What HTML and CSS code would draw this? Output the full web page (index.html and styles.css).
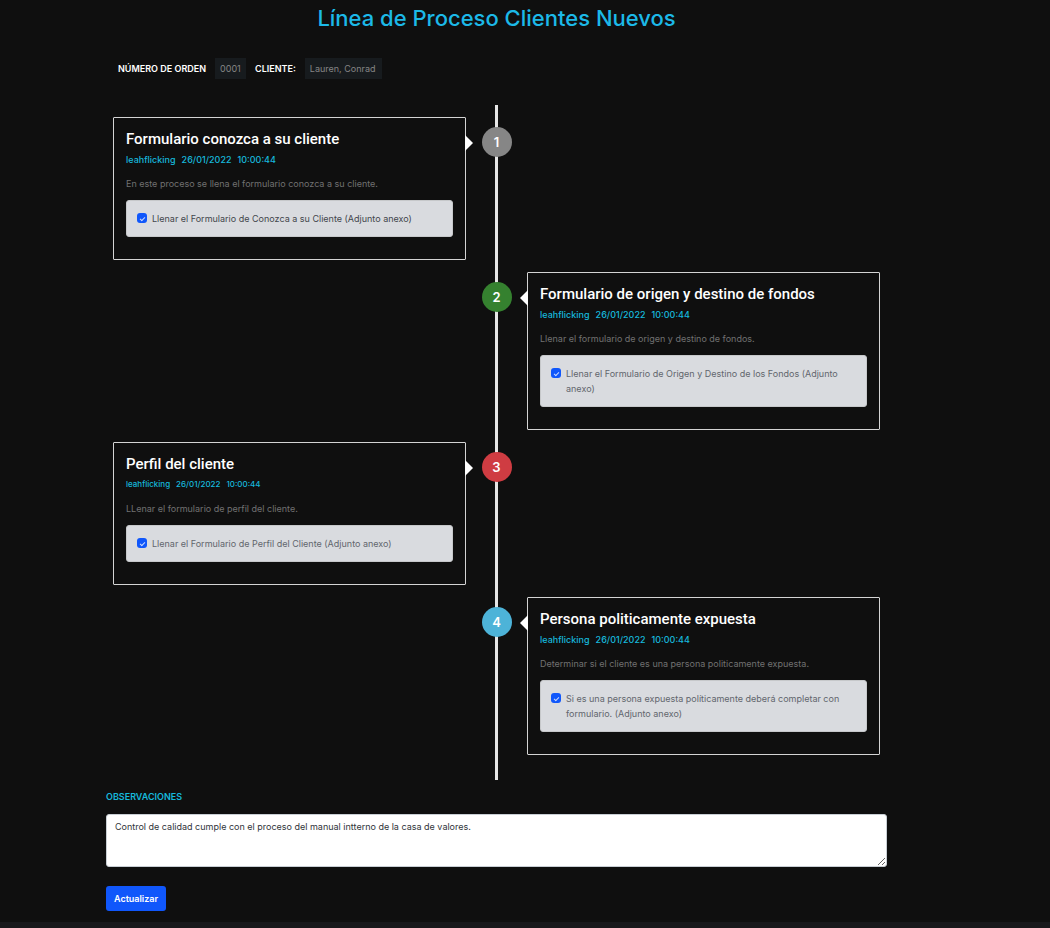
FILE: index.html
```
<!DOCTYPE html>
<html lang="es">
<head>
<meta charset="utf-8">
<meta name="viewport" content="width=device-width, initial-scale=1">
<title>Línea de Proceso Clientes Nuevos</title>
<link rel="stylesheet" href="styles.css">
</head>
<body>
<main class="page">
  <h1 class="page-title">Línea de Proceso Clientes Nuevos</h1>

  <form class="order">
    <label class="order-label" for="orden">NÚMERO DE ORDEN</label>
    <input class="order-value order-number" id="orden" value="0001" readonly>
    <label class="order-label" for="cliente">CLIENTE:</label>
    <input class="order-value order-client" id="cliente" value="Lauren, Conrad" readonly>
  </form>

  <ol class="timeline">
    <li class="step">
      <span class="badge badge-gray">1</span>
      <article class="panel">
        <h2 class="panel-title">Formulario conozca a su cliente</h2>
        <p class="meta"><span>leahflicking</span><span>26/01/2022</span><span>10:00:44</span></p>
        <p class="description">En este proceso se llena el formulario conozca a su cliente.</p>
        <label class="task task-dark"><input class="check" type="checkbox" checked><span>Llenar el Formulario de Conozca a su Cliente (Adjunto anexo)</span></label>
      </article>
    </li>
    <li class="step step-right">
      <span class="badge badge-green">2</span>
      <article class="panel">
        <h2 class="panel-title">Formulario de origen y destino de fondos</h2>
        <p class="meta"><span>leahflicking</span><span>26/01/2022</span><span>10:00:44</span></p>
        <p class="description">Llenar el formulario de origen y destino de fondos.</p>
        <label class="task"><input class="check" type="checkbox" checked><span>Llenar el Formulario de Origen y Destino de los Fondos (Adjunto anexo)</span></label>
      </article>
    </li>
    <li class="step">
      <span class="badge badge-red">3</span>
      <article class="panel">
        <h2 class="panel-title">Perfil del cliente</h2>
        <p class="meta meta-small"><span>leahflicking</span><span>26/01/2022</span><span>10:00:44</span></p>
        <p class="description">LLenar el formulario de perfil del cliente.</p>
        <label class="task"><input class="check" type="checkbox" checked><span>Llenar el Formulario de Perfil del Cliente (Adjunto anexo)</span></label>
      </article>
    </li>
    <li class="step step-right">
      <span class="badge badge-blue">4</span>
      <article class="panel">
        <h2 class="panel-title">Persona politicamente expuesta</h2>
        <p class="meta"><span>leahflicking</span><span>26/01/2022</span><span>10:00:44</span></p>
        <p class="description">Determinar si el cliente es una persona politicamente expuesta.</p>
        <label class="task"><input class="check" type="checkbox" checked><span>Si es una persona expuesta políticamente deberá completar con formulario. (Adjunto anexo)</span></label>
      </article>
    </li>
  </ol>

  <form class="notes">
    <label class="notes-label" for="observaciones">OBSERVACIONES</label>
    <textarea class="notes-text" id="observaciones">Control de calidad cumple con el proceso del manual intterno de la casa de valores.</textarea>
    <button class="submit" type="button">Actualizar</button>
  </form>
</main>
<footer class="footer"></footer>
</body>
</html>
```

FILE: styles.css
```
* {
  box-sizing: border-box;
}

body {
  margin: 0;
  min-height: 100vh;
  display: flex;
  flex-direction: column;
  background: #0f0f0f;
  color: #fff;
  font-family: Inter, "Liberation Sans", sans-serif;
  font-size: 9px;
  line-height: 15px;
}

h1, h2, p, ol {
  margin: 0;
  padding: 0;
}

input, textarea, button {
  font: inherit;
}

.page {
  flex: 1;
  padding: 4px 163px 0 106px;
}

.page-title {
  color: #1cb9e8;
  font-size: 22px;
  font-weight: 500;
  line-height: 28px;
  text-align: center;
}

.order {
  display: flex;
  align-items: center;
  gap: 9px;
  padding: 26px 12px;
}

.order-label {
  font-weight: 600;
}

.order-value {
  height: 21px;
  padding: 0 5px;
  border: 0;
  background: #171b1e;
  color: #858585;
}

.order-number {
  width: 31px;
}

.order-client {
  width: 77px;
}

.timeline {
  position: relative;
  display: flex;
  flex-direction: column;
  gap: 12px;
  padding: 12px 7px 25px;
  list-style: none;
}

.timeline::before {
  content: "";
  position: absolute;
  top: 0;
  bottom: 0;
  left: calc(50% - 2px);
  width: 3px;
  background: #e6e6e6;
}

.step {
  display: grid;
  grid-template-columns: 1fr 61px 1fr;
  align-items: start;
}

.badge {
  grid-column: 2;
  grid-row: 1;
  justify-self: center;
  z-index: 1;
  width: 30px;
  height: 30px;
  margin-top: 10px;
  border-radius: 50%;
  font-size: 13px;
  font-weight: 600;
  line-height: 30px;
  text-align: center;
}

.badge-gray { background: #868686; }
.badge-green { background: #35812f; }
.badge-red { background: #cf3c42; }
.badge-blue { background: #4db3d8; }

.panel {
  position: relative;
  grid-column: 1;
  grid-row: 1;
  padding: 12px 12px 22px;
  border: 1px solid #d4d4d4;
  border-radius: 1px;
}

.step-right .panel {
  grid-column: 3;
}

.panel::after {
  content: "";
  position: absolute;
  top: 17px;
  left: 100%;
  border: 8px solid transparent;
  border-right: 0;
  border-left-color: #fff;
}

.step-right .panel::after {
  left: auto;
  right: 100%;
  border: 8px solid transparent;
  border-left: 0;
  border-right-color: #fff;
}

.panel-title {
  font-family: Roboto, "Liberation Sans", sans-serif;
  font-size: 15px;
  font-weight: 500;
  line-height: 18px;
}

.meta {
  display: flex;
  gap: 6px;
  margin-top: 4px;
  color: #16b8dc;
  font-weight: 500;
}

.meta-small {
  font-size: 8px;
}

.description {
  margin: 9px 0;
  color: #717171;
}

.task {
  display: flex;
  align-items: flex-start;
  gap: 5px;
  padding: 10px;
  border: 1px solid #c6c8ca;
  border-radius: 3px;
  background: #d9dbdf;
  color: #62666d;
}

.task-dark {
  color: #42464c;
}

.check {
  appearance: none;
  flex: none;
  width: 10px;
  height: 10px;
  margin: 2px 0 0;
  border-radius: 3px;
  background: #1057fb;
  display: grid;
  place-items: center;
}

.check::before {
  content: "";
  width: 4px;
  height: 2px;
  border-left: 1px solid #c9d8fe;
  border-bottom: 1px solid #c9d8fe;
  transform: rotate(-45deg);
}

.notes {
  display: flex;
  flex-direction: column;
  align-items: flex-start;
  padding-top: 9px;
}

.notes-label {
  color: #16b8dc;
  font-weight: 600;
}

.notes-text {
  width: 100%;
  height: 53px;
  margin: 10px 0 19px;
  padding: 4px 8px;
  border: 1px solid #c8ced4;
  border-radius: 3px;
  background: #fff;
  color: #30343a;
  resize: vertical;
}

.submit {
  padding: 5px 8px;
  border: 0;
  border-radius: 3px;
  background: #1057fb;
  color: #fff;
  font-weight: 600;
}

.footer {
  height: 6px;
  background: #18181b;
}
```
